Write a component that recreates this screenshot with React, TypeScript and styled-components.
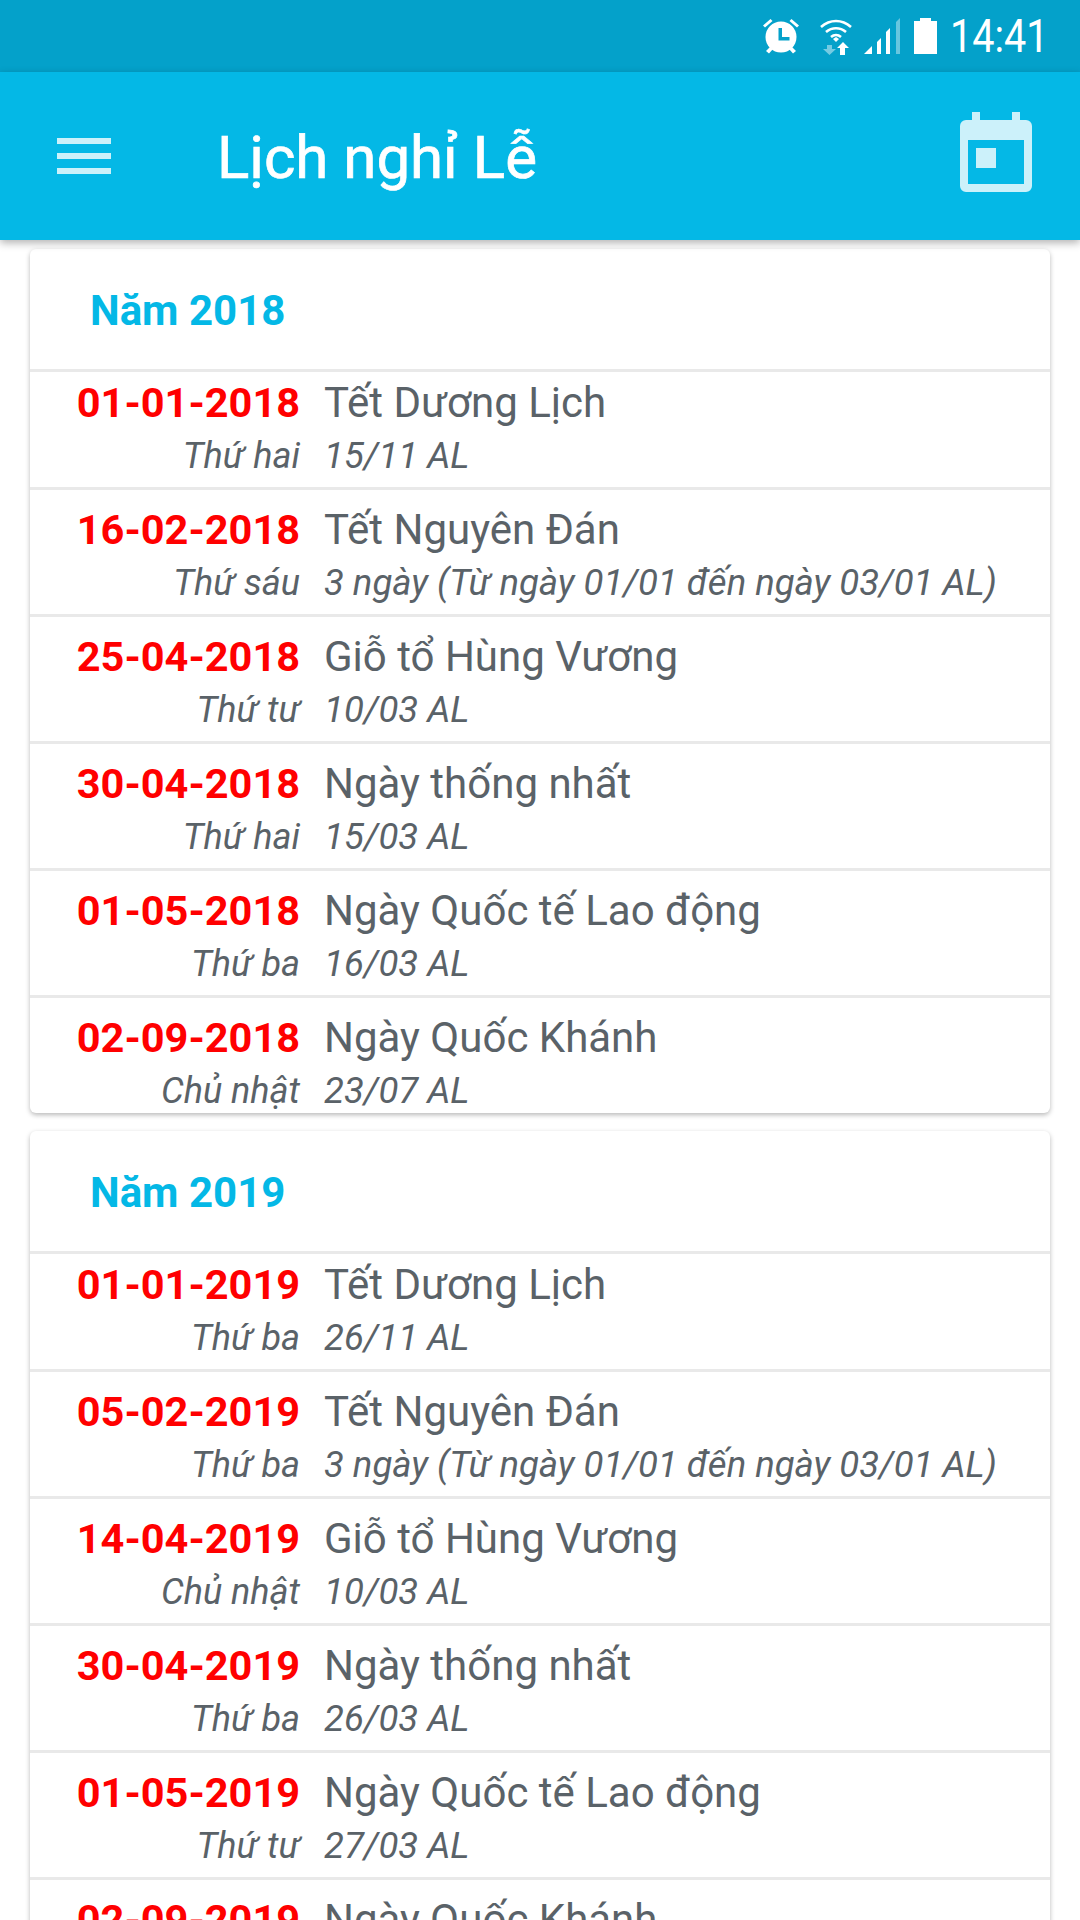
import React from 'react'
import styled, { createGlobalStyle } from 'styled-components'

const GlobalStyle = createGlobalStyle`
  html, body {
    margin: 0;
    padding: 0;
    width: 1080px;
    height: 1920px;
    overflow: hidden;
    background: #fff;
    font-family: Roboto, "Noto Sans", sans-serif;
  }
`

const Screen = styled.div`
  width: 1080px;
  height: 1920px;
  overflow: hidden;
  display: flex;
  flex-direction: column;
`

const StatusBar = styled.div`
  height: 72px;
  flex: none;
  background: #04a1ca;
  display: flex;
  align-items: center;
  justify-content: flex-end;
  padding-right: 31px;
  color: #fff;
`

const StatusSlot = styled.div<{ $gap: number }>`
  display: flex;
  margin-right: ${(p) => p.$gap}px;
`

// the phone's clock font is narrower than Roboto
const Clock = styled.span`
  width: 96px;
  font-size: 46px;
  line-height: 72px;
  white-space: nowrap;
  display: flex;
  justify-content: flex-end;
`

const ClockText = styled.span`
  display: block;
  transform: scaleX(0.86);
  transform-origin: right center;
`

const AppBar = styled.header`
  height: 168px;
  flex: none;
  background: #04b8e6;
  display: flex;
  align-items: center;
  box-shadow: 0 3px 8px rgba(0, 0, 0, 0.3);
  position: relative;
  z-index: 2;
`

const MenuButton = styled.div`
  width: 54px;
  margin-left: 57px;
  display: flex;
  flex-direction: column;
  gap: 9px;
`

const MenuBar = styled.span`
  display: block;
  height: 6px;
  background: #ccf1fa;
`

const Title = styled.h1`
  margin: 2px 0 0 106px;
  font-size: 60px;
  font-weight: 400;
  color: #fff;
  flex: 1;
  -webkit-text-stroke: 0.7px #fff;
`

const CalendarButton = styled.svg`
  width: 72px;
  height: 80px;
  margin: 0 48px 8px 0;
  display: block;
`

const Content = styled.main`
  padding: 9px 30px 0 30px;
  display: flex;
  flex-direction: column;
  gap: 18px;
`

const Card = styled.section`
  background: #fff;
  border-radius: 6px;
  box-shadow: 0 2px 5px rgba(0, 0, 0, 0.28);
  flex: none;
`

const YearHeader = styled.div`
  box-sizing: border-box;
  height: 120px;
  display: flex;
  align-items: center;
  padding: 2px 0 0 60px;
  font-size: 42px;
  font-weight: 700;
  color: #04b8e6;
`

const Row = styled.div<{ $first?: boolean; $last?: boolean }>`
  box-sizing: border-box;
  border-top: 3px solid #e9e9e9;
  height: ${(p) => (p.$first || p.$last ? 118 : 127)}px;
  display: grid;
  grid-template-columns: 270px 1fr;
  column-gap: 24px;
  align-content: start;
  padding-top: ${(p) => (p.$first ? 4 : 13)}px;
  overflow: hidden;
`

const DateText = styled.div`
  font-size: 41.5px;
  font-weight: 700;
  line-height: 54px;
  color: #ff0000;
  text-align: right;
`

const HolidayName = styled.div`
  font-size: 42px;
  line-height: 54px;
  color: #5a6268;
`

const Weekday = styled.div`
  font-size: 36px;
  font-style: italic;
  line-height: 50px;
  margin-top: 1px;
  color: #5a6268;
  text-align: right;
  white-space: nowrap;
`

const LunarNote = styled.div`
  font-size: 36.5px;
  font-style: italic;
  line-height: 50px;
  margin-top: 1px;
  color: #5a6268;
  white-space: nowrap;
`

const tet = '3 ngày (Từ ngày 01/01 đến ngày 03/01 AL)'

const years = [
  {
    year: 2018,
    rows: [
      ['01-01-2018', 'Tết Dương Lịch', 'Thứ hai', '15/11 AL'],
      ['16-02-2018', 'Tết Nguyên Đán', 'Thứ sáu', tet],
      ['25-04-2018', 'Giỗ tổ Hùng Vương', 'Thứ tư', '10/03 AL'],
      ['30-04-2018', 'Ngày thống nhất', 'Thứ hai', '15/03 AL'],
      ['01-05-2018', 'Ngày Quốc tế Lao động', 'Thứ ba', '16/03 AL'],
      ['02-09-2018', 'Ngày Quốc Khánh', 'Chủ nhật', '23/07 AL'],
    ],
  },
  {
    year: 2019,
    rows: [
      ['01-01-2019', 'Tết Dương Lịch', 'Thứ ba', '26/11 AL'],
      ['05-02-2019', 'Tết Nguyên Đán', 'Thứ ba', tet],
      ['14-04-2019', 'Giỗ tổ Hùng Vương', 'Chủ nhật', '10/03 AL'],
      ['30-04-2019', 'Ngày thống nhất', 'Thứ ba', '26/03 AL'],
      ['01-05-2019', 'Ngày Quốc tế Lao động', 'Thứ tư', '27/03 AL'],
      ['02-09-2019', 'Ngày Quốc Khánh', 'Thứ hai', '03/08 AL'],
    ],
  },
]

const AlarmIcon = () => (
  <svg width="36" height="36" viewBox="0 0 36 36" fill="#fff">
    <circle cx="18" cy="19" r="15.500" />
    <path d="M0 7.500L7.500 1l2 2L2 9.500zM36 7.500L28.500 1l-2 2L34 9.500zM3 33l4-4 3 2-4 4.500zM33 33l-4-4-3 2 4 4.500z" />
    <path d="M15.500 10h3.500v9h7.500v3.500h-11z" fill="#04a1ca" />
  </svg>
)

const WifiIcon = () => (
  <svg width="32" height="37" viewBox="0 0 32 37">
    <g fill="none" stroke="#fff" strokeWidth="2.6">
      <path d="M1 9c9-8 21-8 30 0" />
      <path d="M6 14c6-5 14-5 20 0" />
      <path d="M11 19c3-2.500 7-2.500 10 0" />
    </g>
    <path d="M13 21l3-2 3 2-3 3z" fill="#fff" />
    <path d="M7 27h5v4h4l-6.500 6-6.500-6h4z" fill="#fff" opacity="0.45" />
    <path d="M23 24l6 6h-4v7h-5v-7h-3z" fill="#fff" />
  </svg>
)

const SignalIcon = () => (
  <svg width="36" height="36" viewBox="0 0 36 36" fill="#fff">
    <path d="M0 36l8-8v8z" />
    <path d="M13 24l4-4v16h-4z" />
    <path d="M22 14l4-4v26h-4z" />
    <path d="M32 4l4-4v36h-4z" opacity="0.4" />
  </svg>
)

const BatteryIcon = () => (
  <svg width="23" height="36" viewBox="0 0 23 36" fill="#fff">
    <path d="M6 0h11v3h6v33H0V3h6z" />
  </svg>
)

export default function App() {
  return (
    <Screen>
      <GlobalStyle />
      <StatusBar>
        <StatusSlot $gap={21}>
          <AlarmIcon />
        </StatusSlot>
        <StatusSlot $gap={12}>
          <WifiIcon />
        </StatusSlot>
        <StatusSlot $gap={14}>
          <SignalIcon />
        </StatusSlot>
        <StatusSlot $gap={16}>
          <BatteryIcon />
        </StatusSlot>
        <Clock>
          <ClockText>14:41</ClockText>
        </Clock>
      </StatusBar>
      <AppBar>
        <MenuButton>
          <MenuBar />
          <MenuBar />
          <MenuBar />
        </MenuButton>
        <Title>Lịch nghỉ Lễ</Title>
        <CalendarButton viewBox="0 0 72 80" fill="#ccf1fa">
          <path
            fillRule="evenodd"
            d="M12 0h8v8h32V0h8v8h6a6 6 0 0 1 6 6v60a6 6 0 0 1-6 6H6a6 6 0 0 1-6-6V14a6 6 0 0 1 6-6h6zM8 28v44h56V28z"
          />
          <rect x="16" y="36" width="20" height="20" />
        </CalendarButton>
      </AppBar>
      <Content>
        {years.map((y) => (
          <Card key={y.year}>
            <YearHeader>Năm {y.year}</YearHeader>
            {y.rows.map((r, i) => (
              <Row key={r[0]} $first={i === 0} $last={i === y.rows.length - 1}>
                <DateText>{r[0]}</DateText>
                <HolidayName>{r[1]}</HolidayName>
                <Weekday>{r[2]}</Weekday>
                <LunarNote>{r[3]}</LunarNote>
              </Row>
            ))}
          </Card>
        ))}
      </Content>
    </Screen>
  )
}
